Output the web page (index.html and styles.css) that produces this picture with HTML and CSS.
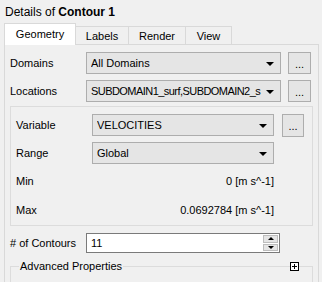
FILE: index.html
```html
<!DOCTYPE html>
<html>
<head>
<meta charset="utf-8">
<link rel="stylesheet" href="styles.css">
</head>
<body>
<div class="title">Details of <b>Contour 1</b></div>
<div class="tabs">
  <div class="tab active">Geometry</div>
  <div class="tab t-labels">Labels</div>
  <div class="tab t-render">Render</div>
  <div class="tab t-view">View</div>
</div>
<div class="panel">
  <div class="row r-domains">
    <div class="label">Domains</div>
    <div class="combo"><span class="ctext">All Domains</span><span class="arrow"></span></div>
    <div class="btn">...</div>
  </div>
  <div class="row r-locations">
    <div class="label">Locations</div>
    <div class="combo"><span class="ctext narrow">SUBDOMAIN1_surf,SUBDOMAIN2_s</span><span class="arrow"></span></div>
    <div class="btn">...</div>
  </div>
  <div class="group">
    <div class="row">
      <div class="label">Variable</div>
      <div class="combo small"><span class="ctext">VELOCITIES</span><span class="arrow"></span></div>
      <div class="btn sbtn">...</div>
    </div>
    <div class="row r-range">
      <div class="label">Range</div>
      <div class="combo small"><span class="ctext">Global</span><span class="arrow"></span></div>
    </div>
    <div class="row r-min">
      <div class="label">Min</div>
      <div class="value">0 [m s^-1]</div>
    </div>
    <div class="row r-max">
      <div class="label">Max</div>
      <div class="value">0.0692784 [m s^-1]</div>
    </div>
  </div>
  <div class="row r-count">
    <div class="label">&#35; of Contours</div>
    <div class="spin">
      <span class="stext">11</span>
      <span class="spinbtns">
        <span class="sb up"><span class="tri-up"></span></span>
        <span class="sb down"><span class="tri-down"></span></span>
      </span>
    </div>
  </div>
  <div class="adv">
    <span class="advtext">Advanced Properties</span>
    <span class="plus"></span>
  </div>
</div>
</body>
</html>
```
FILE: styles.css
```css
html, body {
  margin: 0;
  padding: 0;
  background: #f0f0f0;
  font-family: "Liberation Sans", Arial, sans-serif;
  font-size: 11px;
  color: #000;
  width: 322px;
  height: 282px;
  overflow: hidden;
}
.title {
  height: 23px;
  line-height: 25px;
  padding-left: 5px;
  font-size: 12px;
}
.title b { font-weight: bold; }
.tabs {
  display: flex;
  align-items: flex-end;
  margin-left: 4px;
  height: 21px;
  position: relative;
  z-index: 1;
}
.tab {
  height: 18px;
  line-height: 18px;
  border: 1px solid #d9d9d9;
  border-bottom: none;
  background: #f0f0f0;
  text-align: center;
  margin-left: -1px;
  box-sizing: border-box;
}
.tab.active {
  line-height: 20px;
  width: 72px;
  background: #fff;
  margin-left: 0;
  margin-bottom: -1px;
  height: 22px;
}
.t-labels { width: 54px; }
.t-render { width: 58px; }
.t-view { width: 47px; }
.panel {
  margin-left: 4px;
  width: 315px;
  height: 240px;
  box-sizing: border-box;
  border: 1px solid #d9d9d9;
  border-bottom: none;
  padding: 7px 0 0 5px;
  background: #f0f0f0;
}
.row {
  display: flex;
  align-items: center;
  height: 22px;
}
.r-locations { margin-top: 6px; }
.label {
  width: 76px;
  flex: none;
}
.combo {
  width: 195px;
  height: 22px;
  box-sizing: border-box;
  border: 1px solid #adadad;
  background: #e5e5e5;
  display: flex;
  align-items: center;
  padding-left: 4px;
  position: relative;
  flex: none;
}
.combo.small { width: 182px; height: 22px; }
.ctext { white-space: nowrap; overflow: hidden; width: calc(100% - 16px); }
.ctext.narrow { letter-spacing: -0.55px; }
.arrow {
  position: absolute;
  right: 6px;
  top: 9px;
  width: 0;
  height: 0;
  border-left: 4px solid transparent;
  border-right: 4px solid transparent;
  border-top: 4px solid #000;
}
.btn {
  margin-left: 7px;
  width: 23px;
  height: 22px;
  box-sizing: border-box;
  border: 1px solid #adadad;
  background: #e5e5e5;
  text-align: center;
  line-height: 22px;
  flex: none;
}
.btn.sbtn { margin-left: 8px; width: 22px; height: 23px; }
.group {
  margin-top: 4px;
  width: 303px;
  height: 120px;
  box-sizing: border-box;
  border: 1px solid #dcdcdc;
  padding: 7px 0 0 5px;
}
.r-range { margin-top: 6px; }
.r-min { margin-top: 6px; height: 22px; }
.r-max { margin-top: 7px; height: 22px; }
.value {
  width: 182px;
  text-align: right;
}
.r-count { margin-top: 7px; height: 20px; }
.spin {
  width: 194px;
  height: 20px;
  box-sizing: border-box;
  border: 1px solid #7a7a7a;
  background: #fff;
  display: flex;
  align-items: center;
  padding-left: 4px;
  position: relative;
}
.stext { flex: 1; }
.spinbtns {
  display: flex;
  flex-direction: column;
  width: 15px;
  margin-right: 1px;
  height: 16px;
  gap: 1px;
}
.sb {
  flex: 1;
  background: #e5e5e5;
  border: 1px solid #bdbdbd;
  display: flex;
  align-items: center;
  justify-content: center;
}
.tri-up {
  width: 0; height: 0;
  border-left: 3px solid transparent;
  border-right: 3px solid transparent;
  border-bottom: 3px solid #000;
}
.tri-down {
  width: 0; height: 0;
  border-left: 3px solid transparent;
  border-right: 3px solid transparent;
  border-top: 3px solid #000;
}
.adv {
  margin-top: 13px;
  width: 303px;
  height: 20px;
  box-sizing: border-box;
  border: 1px solid #dcdcdc;
  border-bottom: none;
  position: relative;
}
.advtext {
  position: absolute;
  left: 8px;
  top: -8px;
  background: #f0f0f0;
  padding: 0 1px;
  line-height: 14px;
}
.plus {
  position: absolute;
  left: 279px;
  top: -5px;
  width: 9px;
  height: 9px;
  box-sizing: border-box;
  border: 1px solid #000;
  background: #fff;
}
.plus::before {
  content: "";
  position: absolute;
  left: 1px; top: 3px;
  width: 5px; height: 1px;
  background: #000;
}
.plus::after {
  content: "";
  position: absolute;
  left: 3px; top: 1px;
  width: 1px; height: 5px;
  background: #000;
}
```
